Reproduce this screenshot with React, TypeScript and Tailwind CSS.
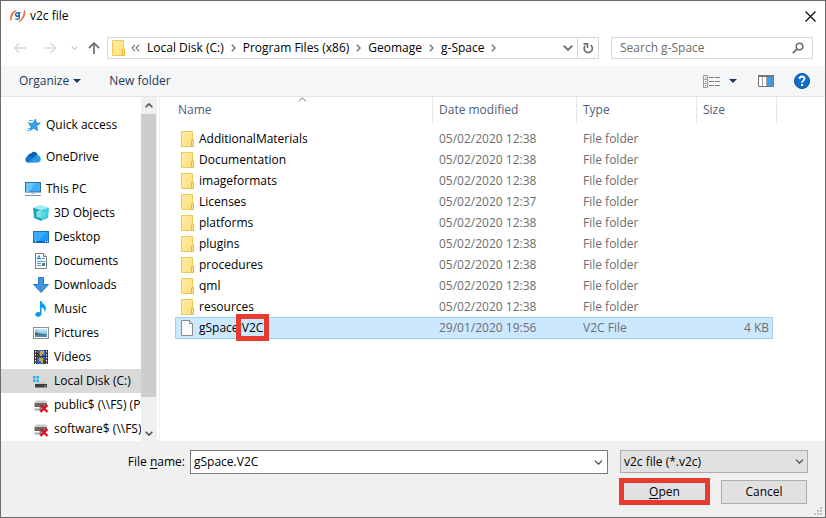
import { useState } from "react";
import type { ReactNode } from "react";

interface FileEntry {
  name: string;
  date: string;
  type: string;
}

interface PlaceEntry {
  label: string;
  icon: ReactNode;
  active?: boolean;
}

const folders: FileEntry[] = [
  { name: "AdditionalMaterials", date: "05/02/2020 12:38", type: "File folder" },
  { name: "Documentation", date: "05/02/2020 12:38", type: "File folder" },
  { name: "imageformats", date: "05/02/2020 12:38", type: "File folder" },
  { name: "Licenses", date: "05/02/2020 12:37", type: "File folder" },
  { name: "platforms", date: "05/02/2020 12:38", type: "File folder" },
  { name: "plugins", date: "05/02/2020 12:38", type: "File folder" },
  { name: "procedures", date: "05/02/2020 12:38", type: "File folder" },
  { name: "qml", date: "05/02/2020 12:38", type: "File folder" },
  { name: "resources", date: "05/02/2020 12:38", type: "File folder" },
];

const crumbs = ["Local Disk (C:)", "Program Files (x86)", "Geomage", "g-Space"];

function Icon({ children }: { children: ReactNode }) {
  return (
    <svg viewBox="0 0 16 16" className="size-4 shrink-0" aria-hidden="true">
      {children}
    </svg>
  );
}

function FolderIcon() {
  return (
    <Icon>
      <defs>
        <linearGradient id="folder" x1="0" y1="0" x2="1" y2="1">
          <stop offset="0" stopColor="#ffeba5" />
          <stop offset="1" stopColor="#ffdf7c" />
        </linearGradient>
      </defs>
      <path d="M2.500.5h11v15h-11z" fill="url(#folder)" stroke="#eecb57" />
      <path d="M12.500 15.500V10l1-1h1v6.500z" fill="#ffe28a" stroke="#e6bb3c" />
    </Icon>
  );
}

function FileIcon() {
  return (
    <Icon>
      <path d="M2.500.5h8l3 3v12h-11z" fill="#fafafa" stroke="#8a8a8a" />
      <path d="M10.500.5v3h3" fill="#e2e2e2" stroke="#8a8a8a" />
    </Icon>
  );
}

function QuickAccessIcon() {
  return (
    <Icon>
      <path
        d="M10.500 2l.8 4 4 .2-3.600 2.600.8 4.800-3.700-2.400-3.800 2.300 1.200-4.300L4 6.500l4.200-.4z"
        fill="#35a2ea"
        stroke="#1f80cf"
        strokeWidth=".8"
      />
      <path d="M4 3.500h4M2.500 5.500h2M4 8.500h2M3 11.500h2M2 13.500h2" stroke="#4fadea" />
    </Icon>
  );
}

function OneDriveIcon() {
  return (
    <Icon>
      <path d="M2.500 9C2 6.500 4 4.500 6 4.500 7.500 2 11.500 2 12.700 6l-4 4z" fill="#0a5fb4" />
      <path d="M3 13.500C-.5 13.500-.5 7.500 3.500 7.300 5 6.700 7 7.500 8 9l5 4z" fill="#1272cc" />
      <path d="M12.500 6.200c4.200 0 4.500 7.300.5 7.300H3.500L9 8.500c.8-1.500 2-2.300 3.500-2.300z" fill="#2a9ae8" />
    </Icon>
  );
}

function PcIcon() {
  return (
    <Icon>
      <rect x=".5" y="1.500" width="15" height="9.500" fill="#3eb2fb" stroke="#356b96" />
      <path d="M1 2h9l-6 9H1z" fill="#69c7ff" />
      <path d="M6 11.500h4v1.500H6z" fill="#b4c3cf" />
      <path d="M0 14.500h16" stroke="#8295a5" />
    </Icon>
  );
}

function CubeIcon() {
  return (
    <Icon>
      <path d="M0 2.500l8 2.500v11l-7-3z" fill="#1fa3b4" />
      <path d="M16 2.500L8 5v11l7-3z" fill="#35cfdf" />
      <path d="M0 2.500L7.500 0 16 2.500 8 5z" fill="#9deef4" />
      <path d="M3.500 6.500L8 5v8l-4.500-1z" fill="#7fe3ec" />
      <path d="M8 5l5 1.500V12l-5 1z" fill="#57d6e4" />
    </Icon>
  );
}

function DesktopIcon() {
  return (
    <Icon>
      <rect x=".5" y="2.500" width="15" height="11" fill="#1e9bf6" stroke="#1374c4" />
      <path d="M1 3h13L5 12H1z" fill="#39adff" />
      <path d="M1 12.500h14" stroke="#0c5ea8" />
      <path d="M2 12.500h1M12 12.500h1m1 0h1" stroke="#fff" />
    </Icon>
  );
}

function DocumentIcon() {
  return (
    <Icon>
      <path d="M2.500.5h8l3 3v12h-11z" fill="#fff" stroke="#7d7d7d" />
      <path d="M10.500.5v3h3" fill="#ddd" stroke="#7d7d7d" />
      <path d="M4 6.500l2-4 1.500 4M5 5.500h2" fill="none" stroke="#2686d9" />
      <path d="M8.500 5.500H12M4 8.500h8M4 10.500h4M4 12.500h4" stroke="#5597cf" />
      <path d="M9 10h3v3H9z" fill="#4b7f94" />
    </Icon>
  );
}

function DownloadIcon() {
  return (
    <Icon>
      <path d="M5.500.5h5v7h5L8 15.500.5 7.500h5z" fill="#3f95e0" stroke="#2f78bd" />
    </Icon>
  );
}

function MusicIcon() {
  return (
    <Icon>
      <path
        d="M7 0h1.500c.3 3 5 3.500 4.300 8-.2 1.500-.8 2.200-1.500 3 .5-3-.8-4-2.800-4.500v6.300c0 4-6.200 3.900-6.200.7C2.300 11 5 10.500 7 11.200z"
        fill="#0d99e8"
      />
    </Icon>
  );
}

function PictureIcon() {
  return (
    <Icon>
      <rect x=".5" y="2.500" width="15" height="11" fill="#fff" stroke="#8e8e8e" />
      <path d="M2 4h12v8H2z" fill="#8fc5ea" />
      <path d="M2 4h12v2L8 7z" fill="#c7e2f5" />
      <path d="M2 7l4 1.500 8 1v1H2z" fill="#376f60" />
      <path d="M2 10h12v2H2z" fill="#4f86b8" />
    </Icon>
  );
}

function VideoIcon() {
  return (
    <Icon>
      <path d="M1 1h14v14H1z" fill="#343434" />
      <path d="M4 1h8v6H4z" fill="#2f65c8" />
      <path d="M4 8h8v7H4z" fill="#2f65c8" />
      <path d="M7 2h4v3H9v2H7zM6 9h4v2h1v3H8v-2H6z" fill="#d3a43a" />
      <path d="M4 4h2v3H4zM10 11h2v4h-2z" fill="#5c3a2b" />
      <path d="M2.500 2v13M13.500 2v13" stroke="#fff" strokeDasharray="1.500 1.500" />
    </Icon>
  );
}

function LocalDiskIcon() {
  return (
    <Icon>
      <path d="M0 3h2.500v2.500H0zM3.500 3H6v2.500H3.500zM0 6.500h2.500V9H0zM3.500 6.500H6V9H3.500z" fill="#1cb4f1" />
      <path d="M4 9.500h8.500l1.500 2H2z" fill="#c6c6c6" />
      <path d="M2 11h12v3.500H2z" fill="#3d3d3d" />
      <path d="M11 12.500h2v1h-2z" fill="#45e04c" />
    </Icon>
  );
}

function NetworkDriveIcon() {
  return (
    <Icon>
      <path d="M3 3.500h9.500l1.500 2.500H1.500z" fill="#c9c9c9" />
      <path d="M1.500 6h12.500v4H1.500z" fill="#6a6a6a" />
      <path d="M1.500 12.500h7" stroke="#a7a7a7" strokeWidth="2" />
      <path d="M6.500 10h3v4h-3z" fill="#8c8c8c" />
      <path d="M7.500 8l7 7m0-7l-7 7" stroke="#e01222" strokeWidth="2.400" />
    </Icon>
  );
}

const roots: PlaceEntry[] = [
  { label: "Quick access", icon: <QuickAccessIcon /> },
  { label: "OneDrive", icon: <OneDriveIcon /> },
  { label: "This PC", icon: <PcIcon /> },
];

const places: PlaceEntry[] = [
  { label: "3D Objects", icon: <CubeIcon /> },
  { label: "Desktop", icon: <DesktopIcon /> },
  { label: "Documents", icon: <DocumentIcon /> },
  { label: "Downloads", icon: <DownloadIcon /> },
  { label: "Music", icon: <MusicIcon /> },
  { label: "Pictures", icon: <PictureIcon /> },
  { label: "Videos", icon: <VideoIcon /> },
  { label: "Local Disk (C:)", icon: <LocalDiskIcon />, active: true },
  { label: "public$ (\\\\FS) (P", icon: <NetworkDriveIcon /> },
  { label: "software$ (\\\\FS)", icon: <NetworkDriveIcon /> },
];

function ChevronDown({ className }: { className: string }) {
  return (
    <svg viewBox="0 0 10 6" className={className} fill="none" stroke="currentColor" aria-hidden="true">
      <path d="M.8.8L5 5 9.200.8" />
    </svg>
  );
}

function Crumb({ label }: { label: string }) {
  return (
    <>
      <a href="#" className="whitespace-nowrap">
        {label}
      </a>
      <svg viewBox="0 0 5 8" className="mx-[7px] h-2 w-[5px] shrink-0" fill="none" stroke="#777" strokeWidth="1.500">
        <path d="M.8.8L4 4 .8 7.200" />
      </svg>
    </>
  );
}

function TitleBar() {
  return (
    <header className="flex h-[30px] items-center pr-[9px] pl-[9px]">
      <svg viewBox="0 0 16 16" className="size-4" aria-hidden="true">
        <path d="M6 2.500C2 3.500 0 7 .8 12.500 1.500 8 3 5 6 2.500z" fill="#f1642a" stroke="#f1642a" strokeWidth=".8" />
        <path d="M14.500 2.500c1.300 4-1 9-5.500 11.500 3.500-3.500 5-7 5.500-11.500z" fill="#f1642a" stroke="#f1642a" strokeWidth=".8" />
        <circle cx="7.500" cy="6.500" r="1.800" fill="none" stroke="#276fae" strokeWidth="1.500" />
        <path d="M10.500 4.800H9.300V10c0 1.600-2.600 1.800-4 .8" fill="none" stroke="#276fae" strokeWidth="1.400" />
      </svg>
      <h1 className="ml-1 flex-1">v2c file</h1>
      <button type="button" aria-label="Close">
        <svg viewBox="0 0 11 11" className="size-[11px]" stroke="#000" strokeWidth="1.100">
          <path d="M.5.5l10 10m0-10l-10 10" />
        </svg>
      </button>
    </header>
  );
}

function NavBar() {
  return (
    <nav className="flex items-center pt-[6px] pr-3 pb-[7px] pl-3">
      <button type="button" aria-label="Back" className="text-[#dadada]">
        <svg viewBox="0 0 14 12" className="h-3 w-[14px]" fill="none" stroke="currentColor" strokeWidth="1.500">
          <path d="M13 6H2M6.500 1L1.500 6l5 5" />
        </svg>
      </button>
      <button type="button" aria-label="Forward" className="ml-4 text-[#dadada]">
        <svg viewBox="0 0 14 12" className="h-3 w-[14px]" fill="none" stroke="currentColor" strokeWidth="1.500">
          <path d="M1 6h11M7.500 1l5 5-5 5" />
        </svg>
      </button>
      <button type="button" aria-label="Recent locations" className="ml-[14px] text-[#d4d4d4]">
        <ChevronDown className="h-1 w-[7px] stroke-2" />
      </button>
      <button type="button" aria-label="Up" className="ml-[10px] text-[#767676]">
        <svg viewBox="0 0 12 14" className="h-[14px] w-3" fill="none" stroke="currentColor" strokeWidth="1.800">
          <path d="M6 13V2M1 7l5-5 5 5" />
        </svg>
      </button>
      <div className="ml-[7px] flex h-[22px] flex-1 items-center border border-[#d9d9d9]">
        <span className="mr-[5px] ml-[2px]">
          <FolderIcon />
        </span>
        <svg viewBox="0 0 9 8" className="mr-[7px] h-2 w-[9px] shrink-0" fill="none" stroke="#777" strokeWidth="1.200">
          <path d="M4 .8L1 4l3 3.200M8 .8L5 4l3 3.200" />
        </svg>
        {crumbs.map((crumb) => (
          <Crumb key={crumb} label={crumb} />
        ))}
        <button type="button" aria-label="Previous locations" className="mr-1 ml-auto text-[#777]">
          <ChevronDown className="h-[6px] w-[10px] stroke-2" />
        </button>
        <button
          type="button"
          aria-label="Refresh"
          className="flex h-full w-[21px] items-center justify-center border-l border-[#d9d9d9]"
        >
          <svg viewBox="0 0 12 12" className="size-3" fill="none" stroke="#6f6f6f" strokeWidth="1.700">
            <path d="M8.800 3.200A4.100 4.100 0 1 1 3.200 3.700M1.500 1.800h4V6" />
          </svg>
        </button>
      </div>
      <div className="ml-3 flex h-[22px] w-[202px] items-center border border-[#d9d9d9] pr-2 pl-2">
        <input
          type="search"
          aria-label="Search g-Space"
          placeholder="Search g-Space"
          className="min-w-0 flex-1 outline-none placeholder:text-[#6d6d6d]"
        />
        <svg viewBox="0 0 12 12" className="size-3" fill="none" stroke="#6f6f6f">
          <circle cx="7.500" cy="4.500" r="3.300" strokeWidth="1.600" />
          <path d="M5 7L.8 11.200" strokeWidth="1.800" />
        </svg>
      </div>
    </nav>
  );
}

function Toolbar() {
  return (
    <div className="flex h-[31px] items-center border-b border-[#e5e5e5] bg-[#f5f6f7] pr-[15px] pl-[18px] text-[#1e395b]">
      <button type="button" className="flex items-center gap-1">
        Organize
        <svg viewBox="0 0 8 4" className="h-1 w-2" fill="currentColor">
          <path d="M0 0h8L4 4z" />
        </svg>
      </button>
      <button type="button" className="ml-7">
        New folder
      </button>
      <button type="button" aria-label="Change your view" className="ml-auto flex items-center gap-[9px]">
        <svg viewBox="0 0 17 13" className="h-[13px] w-[17px]" fill="none">
          <path d="M.5.5h4v12h-4zM.5 4.500h4M.5 8.500h4" stroke="#9a9a9a" />
          <path d="M2 2.500h1" stroke="#777" />
          <path d="M2 6.500h1" stroke="#2e7bd1" />
          <path d="M2 10.500h1" stroke="#d03030" />
          <path d="M6 2.500h5M12 2.500h5M6 6.500h5M12 6.500h5M6 10.500h5M12 10.500h5" stroke="#7c7c7c" />
        </svg>
        <svg viewBox="0 0 8 4" className="h-1 w-2" fill="currentColor">
          <path d="M0 0h8L4 4z" />
        </svg>
      </button>
      <button type="button" aria-label="Show the preview pane" className="ml-[21px]">
        <svg viewBox="0 0 16 12" className="h-3 w-4">
          <path d="M.5.500h15v11H.5z" fill="#fff" stroke="#757575" />
          <path d="M0 1h16" stroke="#757575" strokeWidth="2" />
          <path d="M4.500 2v9M8.500 2v9" stroke="#a5a5a5" />
          <path d="M9 2h6v9H9z" fill="#3f9de8" />
        </svg>
      </button>
      <button type="button" aria-label="Get help" className="ml-5">
        <svg viewBox="0 0 16 16" className="size-4">
          <circle cx="8" cy="8" r="7.500" fill="#0f6fd0" stroke="#0b4c92" />
          <path
            d="M5.500 6c0-3.300 5-3.300 5-.3C10.500 7.500 8 7.500 8 9.700"
            fill="none"
            stroke="#fff"
            strokeWidth="1.800"
          />
          <path d="M7 11h2v2H7z" fill="#fff" />
        </svg>
      </button>
    </div>
  );
}

function Sidebar() {
  return (
    <aside className="flex w-[159px] shrink-0 border-r border-[#f0f0f0]">
      <div className="min-w-0 flex-1 overflow-hidden pt-4">
        <ul className="flex flex-col gap-2">
          {roots.map((place) => (
            <li key={place.label}>
              <a href="#" className="flex h-6 items-center gap-[5px] pl-6 whitespace-nowrap">
                {place.icon}
                {place.label}
              </a>
            </li>
          ))}
        </ul>
        <ul>
          {places.map((place) => (
            <li key={place.label}>
              <a
                href="#"
                className={`flex h-6 items-center gap-[5px] pl-8 whitespace-nowrap ${
                  place.active ? "bg-[#d9d9d9]" : ""
                }`}
              >
                {place.icon}
                {place.label}
              </a>
            </li>
          ))}
        </ul>
      </div>
      {/* Scrollbar */}
      <div className="mr-[2px] flex w-4 flex-col bg-[#f0f0f0] text-[#505050]">
        <div className="flex h-[17px] items-center justify-center">
          <ChevronDown className="h-[5px] w-2 rotate-180 stroke-2" />
        </div>
        <div className="mr-px flex-1 bg-[#cdcdcd]" />
        <div className="flex h-11 items-end justify-center pb-[5px]">
          <ChevronDown className="h-[5px] w-2 stroke-2" />
        </div>
      </div>
    </aside>
  );
}

function HeaderCell({ label, width }: { label: string; width: string }) {
  return (
    <th className={`${width} h-[31px] p-0 text-left align-top font-normal text-[#4c607a]`}>
      <div className="flex h-[26px] items-center border-r border-[#e5e5e5] pl-[6px]">{label}</div>
    </th>
  );
}

function FileTable() {
  return (
    <div className="relative min-w-0 flex-1 overflow-hidden pl-[15px]">
      <ChevronDown className="absolute top-0 left-[138px] h-[5px] w-[9px] rotate-180 text-[#555]" />
      <table className="table-fixed border-separate border-spacing-0">
        <thead>
          <tr>
            <th className="h-[31px] w-[258px] p-0 text-left align-top font-normal text-[#4c607a]">
              <div className="flex h-[26px] items-center border-r border-[#e5e5e5] pl-[3px]">Name</div>
            </th>
            <HeaderCell label="Date modified" width="w-36" />
            <HeaderCell label="Type" width="w-[120px]" />
            <th colSpan={2} className="h-[31px] p-0 text-left align-top font-normal text-[#4c607a]">
              <div className="flex h-[26px] items-center border-r border-[#e5e5e5] pl-[6px]">Size</div>
            </th>
          </tr>
        </thead>
        <tbody>
          {folders.map((folder) => (
            <tr key={folder.name} className="text-[#6d6d6d]">
              <td className="h-[21px] p-0 pl-1 text-black">
                <span className="flex items-center gap-1">
                  <FolderIcon />
                  {folder.name}
                </span>
              </td>
              <td className="p-0 pl-[6px]">{folder.date}</td>
              <td className="p-0 pl-[6px]">{folder.type}</td>
              <td className="w-[76px] p-0" />
              <td className="w-1 p-0" />
            </tr>
          ))}
          <tr className="text-[#6d6d6d]">
            <td className="h-[22px] border-y border-l border-[#99d1ff] bg-[#cce8ff] p-0 pl-[3px] text-black">
              <span className="flex items-center gap-1">
                <FileIcon />
                <span>
                  gSpace.
                  <span className="relative">
                    V2C
                    <span className="absolute -inset-x-[6px] -inset-y-[5px] border-5 border-[#e63c2f]" />
                  </span>
                </span>
              </span>
            </td>
            <td className="border-y border-[#99d1ff] bg-[#cce8ff] p-0 pl-[6px]">29/01/2020 19:56</td>
            <td className="border-y border-[#99d1ff] bg-[#cce8ff] p-0 pl-[6px]">V2C File</td>
            <td className="border-y border-r border-[#99d1ff] bg-[#cce8ff] p-0 pr-[3px] text-right">4 KB</td>
            <td className="p-0" />
          </tr>
        </tbody>
      </table>
    </div>
  );
}

function Footer() {
  const [fileName, setFileName] = useState("gSpace.V2C");

  return (
    <form
      className="relative flex h-[76px] shrink-0 items-start bg-[#f0f0f0] pt-[9px] pr-[17px]"
      onSubmit={(e) => e.preventDefault()}
    >
      <label htmlFor="file-name" className="w-[189px] shrink-0 pr-[5px] text-right leading-6">
        File <u className="underline-offset-2">n</u>ame:
      </label>
      <div className="flex h-6 min-w-0 flex-1 items-center border border-[#7a7a7a] bg-white pr-1 pl-[3px]">
        <input
          id="file-name"
          type="text"
          value={fileName}
          onChange={(e) => setFileName(e.target.value)}
          className="min-w-0 flex-1 outline-none"
        />
        <ChevronDown className="h-[5px] w-[9px] stroke-[1.5] text-[#444]" />
      </div>
      <div className="ml-[11px] flex w-[189px] flex-col gap-[5px]">
        <div className="relative ml-px">
          <select
            aria-label="File type"
            className="block h-[23px] w-full appearance-none border border-[#adadad] bg-[#e1e1e1] pl-[3px]"
          >
            <option>v2c file (*.v2c)</option>
          </select>
          <ChevronDown className="pointer-events-none absolute top-[9px] right-1 h-[5px] w-[9px] stroke-[1.5] text-[#444]" />
        </div>
        <div className="flex items-center justify-between pr-px">
          <button type="submit" className="h-[27px] w-[91px] border-5 border-[#e63c2f] bg-[#e1e1e1] leading-4">
            <u className="underline-offset-2">O</u>pen
          </button>
          <button type="button" className="h-6 w-[86px] border border-[#adadad] bg-[#e1e1e1]">
            Cancel
          </button>
        </div>
      </div>
      <svg viewBox="0 0 8 8" className="absolute right-[3px] bottom-[2px] size-2" fill="#bfbfbf">
        <path d="M6 0h2v2H6zM3 3h2v2H3zM6 3h2v2H6zM0 6h2v2H0zM3 6h2v2H3zM6 6h2v2H6z" />
      </svg>
    </form>
  );
}

export default function App() {
  return (
    <div className="flex h-screen flex-col border border-[#6b6b6b] bg-white font-['Open_Sans','Noto_Sans',sans-serif] text-[12px] leading-4 text-black">
      <TitleBar />
      <NavBar />
      <Toolbar />
      <main className="flex min-h-0 flex-1 overflow-hidden">
        <Sidebar />
        <FileTable />
      </main>
      <Footer />
    </div>
  );
}
